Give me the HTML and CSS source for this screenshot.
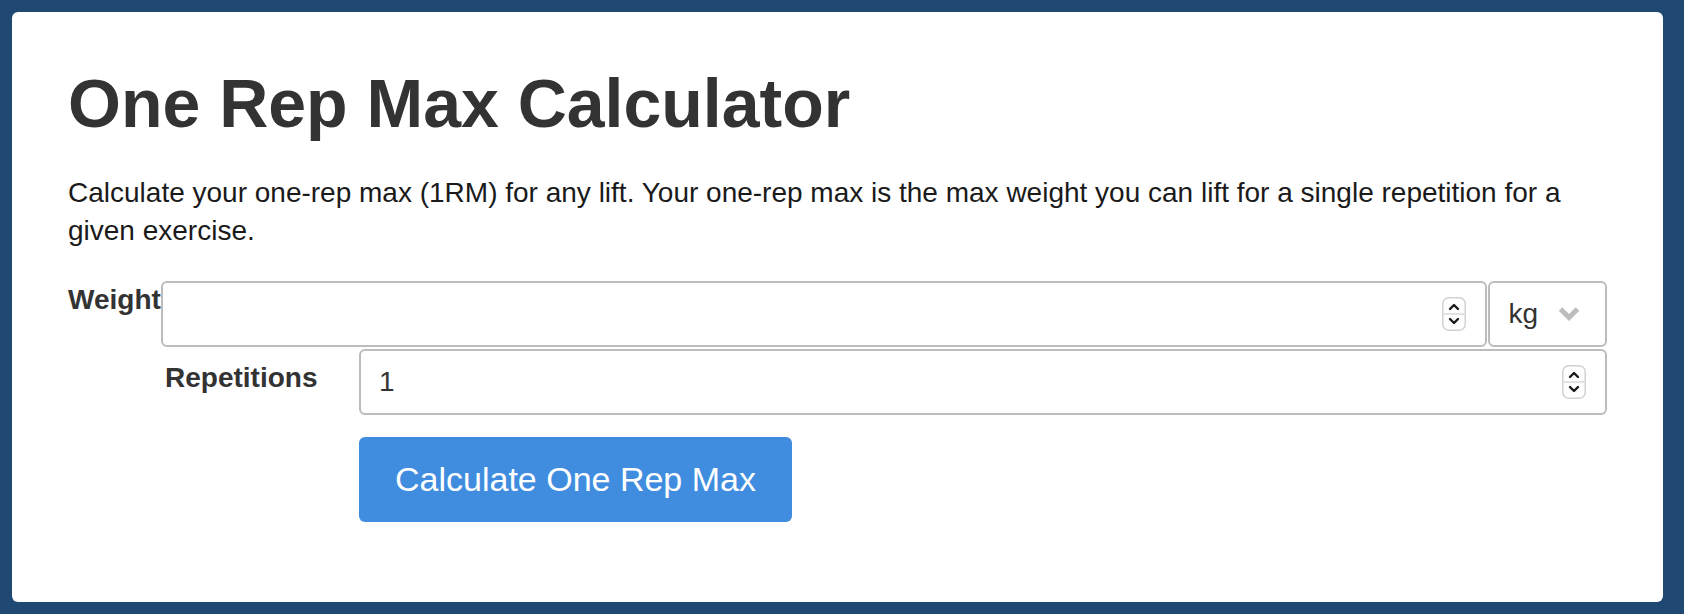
FILE: index.html
```html
<!DOCTYPE html>
<html lang="en">
<head>
<meta charset="utf-8">
<title>One Rep Max Calculator</title>
<link rel="stylesheet" href="styles.css">
</head>
<body>
<main class="card">
  <h1 class="title">One Rep Max Calculator</h1>
  <p class="intro">Calculate your one-rep max (1RM) for any lift. Your one-rep max is the max weight you can lift for a single repetition for a given exercise.</p>
  <form class="form">
    <div class="row-weight">
      <label class="label-inline">Weight</label>
      <div class="input-group">
        <div class="field field-grow">
          <span class="value"></span>
          <svg class="spinner" width="24" height="34" viewBox="0 0 24 34"><rect x="0.75" y="0.75" width="22.5" height="32.5" rx="6" fill="#fff" stroke="#d2d2d2" stroke-width="1.5"/><line x1="1.5" y1="17" x2="22.5" y2="17" stroke="#dadada" stroke-width="1.5"/><polyline points="8,12 12,8 16,12" fill="none" stroke="#1a1a1a" stroke-width="2.4" stroke-linecap="round" stroke-linejoin="round"/><polyline points="8,22 12,26 16,22" fill="none" stroke="#1a1a1a" stroke-width="2.4" stroke-linecap="round" stroke-linejoin="round"/></svg>
        </div>
        <div class="select">
          <span class="value">kg</span>
          <svg class="chevron" width="22" height="15" viewBox="0 0 22 15"><polyline points="2.5,3 11,11.5 19.5,3" fill="none" stroke="#bdbdbd" stroke-width="5"/></svg>
        </div>
      </div>
    </div>
    <div class="row-grid">
      <label class="label-col">Repetitions</label>
      <div class="field">
        <span class="value">1</span>
        <svg class="spinner" width="24" height="34" viewBox="0 0 24 34"><rect x="0.75" y="0.75" width="22.5" height="32.5" rx="6" fill="#fff" stroke="#d2d2d2" stroke-width="1.5"/><line x1="1.5" y1="17" x2="22.5" y2="17" stroke="#dadada" stroke-width="1.5"/><polyline points="8,12 12,8 16,12" fill="none" stroke="#1a1a1a" stroke-width="2.4" stroke-linecap="round" stroke-linejoin="round"/><polyline points="8,22 12,26 16,22" fill="none" stroke="#1a1a1a" stroke-width="2.4" stroke-linecap="round" stroke-linejoin="round"/></svg>
      </div>
    </div>
    <div class="row-grid actions">
      <button type="button" class="btn">Calculate One Rep Max</button>
    </div>
  </form>
</main>
</body>
</html>
```

FILE: styles.css
```css
* { box-sizing: border-box; }

html, body { height: 100%; }

body {
  margin: 0;
  padding: 12px 21px 12px 12px;
  background: #1f4973;
  font-family: "Liberation Sans", Arial, Helvetica, sans-serif;
  color: #333;
}

.card {
  background: #fff;
  border-radius: 6px;
  min-height: 100%;
  padding: 54px 56px 40px 56px;
}

.title {
  margin: 0 0 33px;
  font-size: 68px;
  line-height: 1.1;
  font-weight: bold;
  color: #333;
}

.intro {
  margin: 0 0 31px;
  font-size: 28px;
  line-height: 38px;
  color: #1a1a1a;
}

.form {
  display: flex;
  flex-direction: column;
}

.row-weight {
  display: flex;
  align-items: flex-start;
  margin-bottom: 2px;
}

.label-inline {
  font-size: 28px;
  font-weight: bold;
  line-height: 36px;
  padding-top: 1px;
  color: #333;
}

.input-group {
  flex: 1;
  display: flex;
}

.field {
  height: 66px;
  border: 2px solid #bcbcbc;
  border-radius: 6px;
  display: flex;
  align-items: center;
  justify-content: space-between;
  padding: 0 19px 0 18px;
  font-size: 28px;
  color: #333;
}

.field-grow {
  flex: 1;
  margin-right: 1px;
}

.select {
  height: 66px;
  border: 2px solid #bcbcbc;
  border-radius: 6px;
  display: flex;
  align-items: center;
  gap: 20px;
  padding: 0 25px 0 18px;
  font-size: 28px;
  color: #333;
}

.chevron { display: block; }
.spinner { display: block; }

.row-grid {
  display: grid;
  grid-template-columns: 291px 1fr;
}

.label-col {
  font-size: 28px;
  font-weight: bold;
  line-height: 36px;
  padding-top: 11px;
  padding-left: 97px;
  color: #333;
}

.actions {
  margin-top: 22px;
}

.actions .btn {
  grid-column: 2;
  justify-self: start;
}

.btn {
  font-family: inherit;
  font-size: 34px;
  line-height: 41px;
  padding: 22px 36px;
  border: none;
  border-radius: 6px;
  background: #408de0;
  color: #fff;
  cursor: pointer;
}
```
